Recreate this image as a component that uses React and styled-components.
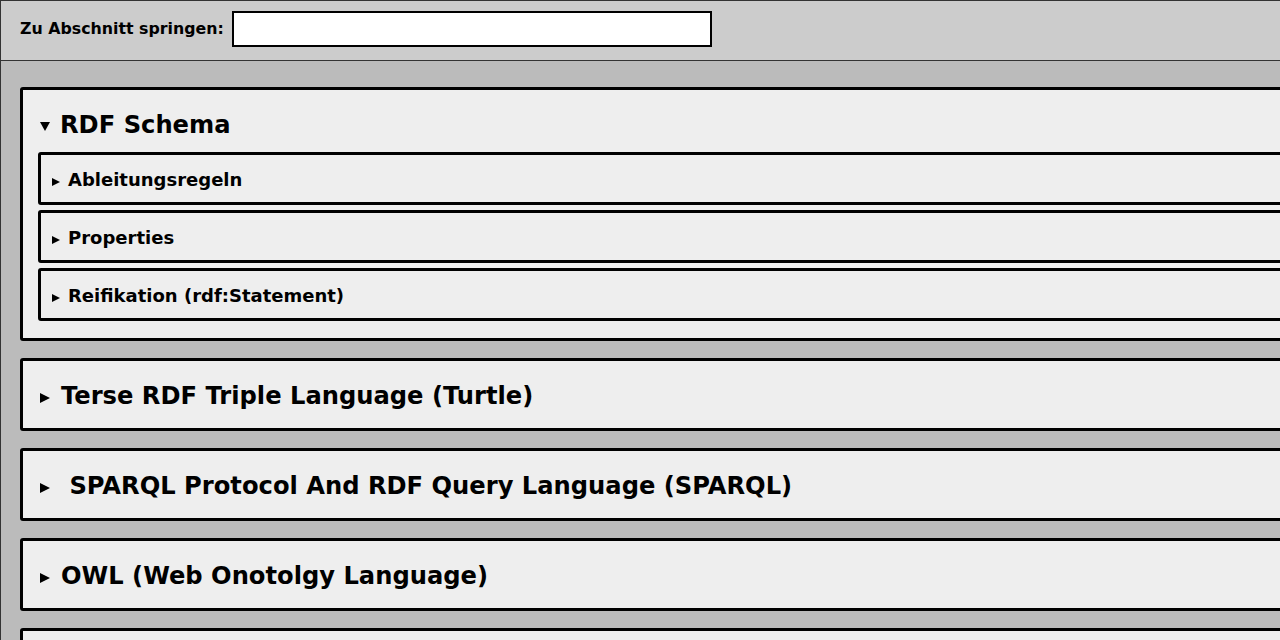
import React from "react";
import styled, { createGlobalStyle } from "styled-components";

const GlobalStyle = createGlobalStyle`
  html, body {
    margin: 0;
    padding: 0;
    background: #bbb;
    overflow: hidden;
  }
  body {
    font-family: "DejaVu Sans", Verdana, sans-serif;
    color: #000;
  }
`;

const Page = styled.div`
  border-top: 1px solid #333;
  border-left: 1px solid #333;
  min-height: 640px;
  background: #bbb;
`;

const Toolbar = styled.div`
  display: flex;
  align-items: flex-start;
  gap: 6px;
  height: 49px;
  padding: 10px 19px 0;
  background: #ccc;
  border-bottom: 1px solid #333;
`;

const Label = styled.label`
  font-size: 15.8px;
  font-weight: bold;
  line-height: 36px;
  width: 206px;
`;

const JumpInput = styled.input`
  box-sizing: border-box;
  width: 480px;
  height: 36px;
  margin: 0;
  border: 2px solid #000;
  background: #fff;
  outline: none;
`;

const Content = styled.main`
  width: 1400px;
  padding: 26px 0 0 19px;
`;

const Section = styled.details`
  border: 3px solid #000;
  border-radius: 3px;
  background: #eee;
  padding: 0 15px;
  margin-bottom: 17px;

  &[open] {
    padding-bottom: 17px;
  }
`;

// summary with a drawn triangle instead of the native marker
const Summary = styled.summary`
  display: flex;
  align-items: center;
  list-style: none;
  font-weight: bold;
  cursor: pointer;

  &::-webkit-details-marker {
    display: none;
  }

  &::before {
    content: "";
    flex: none;
    width: 0;
    height: 0;
    position: relative;
    top: ${(p) => p.$nudge}px;
    border-style: solid;
    border-color: transparent transparent transparent #000;
    border-width: ${(p) => p.$h / 2}px 0 ${(p) => p.$h / 2}px ${(p) => p.$w}px;
    margin-right: ${(p) => p.$gap}px;
  }

  details[open] > &::before {
    border-color: #000 transparent transparent transparent;
    border-width: ${(p) => p.$w - 1}px ${(p) => p.$h / 2}px 0 ${(p) => p.$h / 2}px;
    margin-right: ${(p) => p.$gap - 1}px;
  }
`;

const SectionTitle = styled(Summary).attrs({ $w: 10, $h: 11, $gap: 11, $nudge: 1 })`
  font-size: 24.2px;
  line-height: 27px;
  padding: 22px 0 18px 2px;

  details[open] > & {
    padding-bottom: 13px;
  }
`;

const SubSection = styled.details`
  border: 3px solid #000;
  border-radius: 3px;
  background: #eee;
  padding: 0 11px;
  margin-bottom: 5px;

  &:last-child {
    margin-bottom: 0;
  }
`;

const SubTitle = styled(Summary).attrs({ $w: 8, $h: 9, $gap: 8, $nudge: 2 })`
  font-size: 18px;
  line-height: 21px;
  padding: 14px 0 12px;
`;

const sections = [
  {
    title: "RDF Schema",
    open: true,
    children: ["Ableitungsregeln", "Properties", "Reifikation (rdf:Statement)"],
  },
  { title: "Terse RDF Triple Language (Turtle)" },
  { title: "\u00a0SPARQL Protocol And RDF Query Language (SPARQL)" },
  { title: "OWL (Web Onotolgy Language)" },
  { title: "Linked Data" },
];

export default function App() {
  return (
    <>
      <GlobalStyle />
      <Page>
        <Toolbar>
          <Label htmlFor="jump">Zu Abschnitt springen:</Label>
          <JumpInput id="jump" type="text" />
        </Toolbar>
        <Content>
          {sections.map((s) => (
            <Section key={s.title} open={s.open}>
              <SectionTitle>{s.title}</SectionTitle>
              {s.children &&
                s.children.map((c) => (
                  <SubSection key={c}>
                    <SubTitle>{c}</SubTitle>
                  </SubSection>
                ))}
            </Section>
          ))}
        </Content>
      </Page>
    </>
  );
}
